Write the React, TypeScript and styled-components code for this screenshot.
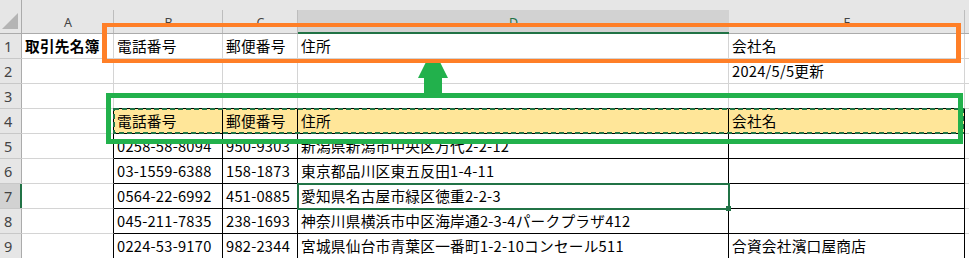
import styled, { createGlobalStyle } from "styled-components";

const ACCENT = "#217346";
const GRID = "#d4d4d4";
const HEAD_BG = "#e6e6e6";
const HEAD_SEL = "#d2d2d2";
const HEAD_LINE = "#ababab";

const GlobalStyle = createGlobalStyle`
	html, body { margin: 0; padding: 0; background: #fff; overflow: hidden; }
	body { font-family: "Noto Sans CJK JP", "Noto Sans", sans-serif; }
`;

const Sheet = styled.div`
	position: relative;
	display: grid;
	grid-template-columns: 22px 92px 109px 75px 431px 236px 1fr;
	grid-template-rows: 34px repeat(9, 25px);
	width: 969px;
	height: 258px;
	overflow: hidden;
`;

const Corner = styled.div`
	display: flex;
	align-items: flex-end;
	justify-content: flex-end;
	padding: 0 3px 4px 0;
	background: ${HEAD_BG};
	border-right: 1px solid ${HEAD_LINE};
	border-bottom: 1px solid ${HEAD_LINE};
	box-sizing: border-box;
`;

const SelectAll = styled.span`
	width: 16px;
	height: 16px;
	background: #b4b4b4;
	clip-path: polygon(100% 0, 100% 100%, 0 100%);
`;

const ColHead = styled.div<{ $selected?: boolean; $last?: boolean }>`
	display: flex;
	align-items: center;
	justify-content: center;
	padding-top: 10px;
	box-sizing: border-box;
	font-family: "Noto Sans", sans-serif;
	font-size: 12.5px;
	color: ${(p) => (p.$selected ? ACCENT : "#444")};
	background: ${(p) =>
		p.$selected
			? `linear-gradient(${HEAD_BG} 0 10px, ${HEAD_SEL} 10px)`
			: p.$last
				? HEAD_BG
				: `linear-gradient(to right, transparent calc(100% - 1px), #bdbdbd 0) no-repeat 0 100% / 100% 24px, ${HEAD_BG}`};
	box-shadow: inset 0 ${(p) => (p.$selected ? "-2px" : "-1px")} 0
		${(p) => (p.$selected ? ACCENT : HEAD_LINE)};
`;

const RowHead = styled.div<{ $selected?: boolean }>`
	display: flex;
	align-items: center;
	padding-left: 4px;
	box-sizing: border-box;
	font-family: "Noto Sans", sans-serif;
	font-size: 14.5px;
	color: #444;
	background: ${(p) => (p.$selected ? HEAD_SEL : HEAD_BG)};
	border-bottom: 1px solid #c8c8c8;
	box-shadow: inset ${(p) => (p.$selected ? "-2px" : "-1px")} 0 0
		${(p) => (p.$selected ? ACCENT : HEAD_LINE)};
`;

const Cell = styled.div<{
	$right: string;
	$bottom: string;
	$fill?: string;
	$bold?: boolean;
	$selected?: boolean;
}>`
	position: relative;
	display: flex;
	align-items: center;
	padding: 1px 3px 0;
	box-sizing: border-box;
	min-width: 0;
	white-space: nowrap;
	font-size: 14.67px;
	letter-spacing: 0.25px;
	line-height: 1;
	font-weight: ${(p) => (p.$bold ? 700 : 400)};
	color: #000;
	background: ${(p) => p.$fill || "#fff"};
	border-right: 1px solid ${(p) => p.$right};
	border-bottom: 1px solid ${(p) => p.$bottom};
	${(p) =>
		p.$selected &&
		`
		z-index: 1;
		outline: 2px solid ${ACCENT};
		outline-offset: -1px;
		&::after {
			content: "";
			position: absolute;
			right: -3px;
			bottom: -3px;
			width: 5px;
			height: 5px;
			background: ${ACCENT};
		}
	`}
`;

const Overlay = styled.div`
	position: absolute;
	inset: 0;
	z-index: 2;
	pointer-events: none;
`;

const Frame = styled.div<{ $color: string; $bw: string }>`
	position: absolute;
	box-sizing: border-box;
	border-style: solid;
	border-color: ${(p) => p.$color};
	border-width: ${(p) => p.$bw};
`;

const Drawing = styled.svg`
	position: absolute;
	inset: 0;
`;

const letters = ["A", "B", "C", "D", "E", ""];

const rows: string[][] = [
	["取引先名簿", "電話番号", "郵便番号", "住所", "会社名", ""],
	["", "", "", "", "2024/5/5更新", ""],
	["", "", "", "", "", ""],
	["", "電話番号", "郵便番号", "住所", "会社名", ""],
	["", "0258-58-8094", "950-9303", "新潟県新潟市中央区万代2-2-12", "", ""],
	["", "03-1559-6388", "158-1873", "東京都品川区東五反田1-4-11", "", ""],
	["", "0564-22-6992", "451-0885", "愛知県名古屋市緑区徳重2-2-3", "", ""],
	["", "045-211-7835", "238-1693", "神奈川県横浜市中区海岸通2-3-4パークプラザ412", "", ""],
	["", "0224-53-9170", "982-2344", "宮城県仙台市青葉区一番町1-2-10コンセール511", "合資会社濱口屋商店", ""],
];

const SEL_ROW = 6;
const SEL_COL = 3;

const inTable = (r: number, c: number) => r >= 3 && r <= 8 && c >= 1 && c <= 4;

export default function App() {
	return (
		<>
			<GlobalStyle />
			<Sheet>
				<Corner>
					<SelectAll />
				</Corner>
				{letters.map((l, c) => (
					<ColHead key={c} $selected={c === SEL_COL} $last={c === 5}>
						{l}
					</ColHead>
				))}
				{rows.map((row, r) => (
					<>
						<RowHead key={`h${r}`} $selected={r === SEL_ROW}>
							{r + 1}
						</RowHead>
						{row.map((text, c) => {
							const black =
								inTable(r, c) || (c === 0 && r >= 3 && r <= 8);
							const blackBottom =
								inTable(r, c) || (r === 2 && c >= 1 && c <= 4);
							return (
								<Cell
									key={`${r}-${c}`}
									$right={c === 5 ? "transparent" : black ? "#000" : GRID}
									$bottom={blackBottom ? "#000" : GRID}
									$fill={r === 3 && inTable(r, c) ? "#ffe699" : undefined}
									$bold={r === 0 && c === 0}
									$selected={r === SEL_ROW && c === SEL_COL}
								>
									{text}
								</Cell>
							);
						})}
					</>
				))}
				<Overlay>
					<Drawing width={969} height={258} viewBox="0 0 969 258">
						<rect
							x={114}
							y={109}
							width={849}
							height={24}
							fill="none"
							stroke={ACCENT}
							strokeWidth={2}
							strokeDasharray="5 3"
						/>
						<polygon
							points="425.5,63 440.5,63 448,78 442,78 442,95 424,95 424,78 418,78"
							fill="#22b14c"
						/>
					</Drawing>
					<Frame
						$color="#ff7f27"
						$bw="4px 5px"
						style={{ left: 102, top: 23, width: 859, height: 40 }}
					/>
					<Frame
						$color="#22b14c"
						$bw="5px"
						style={{ left: 106, top: 93, width: 857, height: 51 }}
					/>
				</Overlay>
			</Sheet>
		</>
	);
}
